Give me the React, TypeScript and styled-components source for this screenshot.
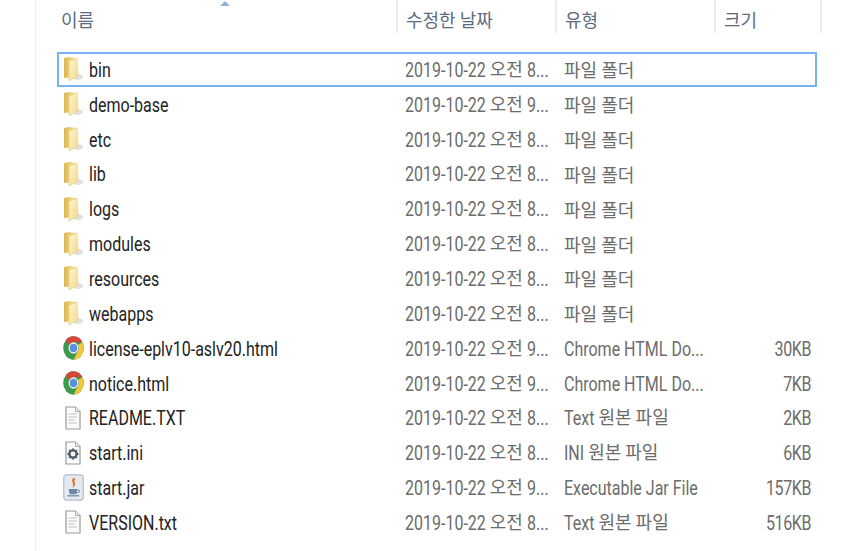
import React from 'react';
import styled, { createGlobalStyle } from 'styled-components';

const GlobalStyle = createGlobalStyle`
	html, body {
		margin: 0;
		padding: 0;
		background: white;
		overflow: hidden;
	}
	body {
		font-family: "Noto Sans CJK KR", sans-serif;
	}
`;

const Window = styled.div`
	width: 843px;
	height: 551px;
	box-sizing: border-box;
	padding-left: 35px;
`;

const Pane = styled.div`
	height: 100%;
	box-sizing: border-box;
	border-left: 1px solid #f1f1f1;
	padding-left: 21px;
`;

const Header = styled.div`
	display: grid;
	grid-template-columns: 341px 159px 159px 106px;
	height: 52px;
	align-items: start;
`;

const HeaderCell = styled.div<{ $first?: boolean }>`
	position: relative;
	height: 33px;
	box-sizing: border-box;
	padding: 7px 0 0 ${props => props.$first ? '4px' : '8px'};
	border-right: 2px solid #e8eef5;
	font-size: 18px;
	line-height: 24px;
	color: #5d6b80;
`;

const SortArrow = styled.span`
	position: absolute;
	top: 1px;
	left: 163px;
	width: 0;
	height: 0;
	border-left: 5px solid transparent;
	border-right: 5px solid transparent;
	border-bottom: 5px solid #8fb4d8;
`;

const Rows = styled.div`
	width: 760px;
`;

const Row = styled.div<{ $selected?: boolean }>`
	display: grid;
	grid-template-columns: 340px 159px 159px 102px;
	height: 34.85px;
	box-sizing: border-box;
	align-items: center;
	font-size: 18px;
	line-height: 24px;
	outline: ${props => props.$selected ? '2px solid #74b3f4' : 'none'};
	outline-offset: -2px;
`;

const NameCell = styled.div`
	display: flex;
	align-items: center;
	gap: 5px;
	padding-left: 5px;
	color: #222222;
	white-space: nowrap;
`;

const IconSlot = styled.span`
	display: flex;
	width: 22px;
	height: 27px;
	flex: none;
	align-items: center;
	justify-content: center;
`;

const Cell = styled.div`
	padding-left: 8px;
	color: #6c6c6c;
	white-space: nowrap;
`;

const SizeCell = styled.div`
	padding-right: 6px;
	text-align: right;
	color: #6c6c6c;
	letter-spacing: -0.4px;
	white-space: nowrap;
`;

// the latin text in the screenshot is tall and narrow
const Latin = styled.span`
	display: inline-block;
	font-family: Roboto, sans-serif;
	font-size: 16px;
	transform: scaleY(1.24);
	transform-origin: center 62%;
`;

const FolderIcon = () => (
	<svg width="20" height="26" viewBox="0 0 20 26">
		<defs>
			<linearGradient id="folderBack" x1="0" y1="0" x2="1" y2="0">
				<stop offset="0" stopColor="#dcb752" />
				<stop offset="1" stopColor="#f5e6a6" />
			</linearGradient>
			<linearGradient id="folderFront" x1="0" y1="0" x2="1" y2="1">
				<stop offset="0" stopColor="#fdf6cf" />
				<stop offset="1" stopColor="#f3d988" />
			</linearGradient>
		</defs>
		<ellipse cx="15" cy="21" rx="5" ry="3" fill="#e0e0e0" />
		<path d="M1 2 L6 1 L13 2 L13 21 L1 22 Z" fill="url(#folderBack)" />
		<path d="M6 5 L14 2 L15 20 L6 25 Z" fill="url(#folderFront)" stroke="#e8cb78" strokeWidth="0.6" />
	</svg>
);

const ChromeIcon = () => (
	<svg width="21" height="26" viewBox="0 0 22 24" preserveAspectRatio="none">
		<circle cx="11" cy="12" r="10.8" fill="#3b9a4b" />
		<path d="M11 1.2 A10.8 10.8 0 0 1 20.3 6.6 L11 6.6 A5.4 5.4 0 0 0 6.2 9.6 L2.8 5 A10.8 10.8 0 0 1 11 1.2 Z" fill="#d4463a" />
		<path d="M20.3 6.6 A10.8 10.8 0 0 1 11 22.8 L15.6 14.8 A5.4 5.4 0 0 0 15.6 9.2 Z" fill="#f2c63f" />
		<circle cx="11" cy="12" r="5.2" fill="#f4f4f4" />
		<circle cx="11" cy="12" r="3.9" fill="#5a8fdf" />
	</svg>
);

const PageIcon = ({ children }: { children: React.ReactNode }) => (
	<svg width="16" height="24" viewBox="0 0 16 24">
		<path d="M1 1 L10.5 1 L15 5.5 L15 23 L1 23 Z" fill="#fbfbfb" stroke="#9a9a9a" strokeWidth="1.2" />
		<path d="M10.5 1 L10.5 5.5 L15 5.5" fill="#e8e8e8" stroke="#b0b0b0" />
		{children}
	</svg>
);

const TextIcon = () => (
	<PageIcon>
		<path d="M3.5 8 H12 M3.5 11 H12 M3.5 14 H9.5 M3.5 17 H12" stroke="#c0c0c0" strokeWidth="1.2" />
	</PageIcon>
);

const IniIcon = () => (
	<PageIcon>
		<circle cx="8" cy="13" r="3.6" fill="none" stroke="#4f5f6b" strokeWidth="2.4" />
		<path d="M8 7.5 V9 M8 17 V18.5 M2.5 13 H4 M12 13 H13.5 M4.1 9.1 L5.2 10.2 M10.8 15.8 L11.9 16.9 M11.9 9.1 L10.8 10.2 M5.2 15.8 L4.1 16.9" stroke="#4f5f6b" strokeWidth="2" />
	</PageIcon>
);

const JarIcon = () => (
	<svg width="21" height="27" viewBox="0 0 22 26" preserveAspectRatio="none">
		<rect x="0.8" y="0.8" width="20.4" height="24.4" rx="3" fill="#e6eaf0" stroke="#b4bcc8" strokeWidth="1.2" />
		<path d="M11 3.5 C7 7 13 9 9.5 13.5 C16 10 10 8 13 4.5 Z" fill="#dd7a2c" />
		<path d="M6 14.5 H15 L14 19.5 H7 Z" fill="#6c88a8" />
		<path d="M15 15.5 C18 15 18 18 14.5 18" fill="none" stroke="#6c88a8" />
		<path d="M4.5 21 H17" stroke="#6c88a8" strokeWidth="1.2" />
	</svg>
);

type Kind = 'folder' | 'chrome' | 'text' | 'ini' | 'jar';

const icons: Record<Kind, React.ReactNode> = {
	folder: <FolderIcon />,
	chrome: <ChromeIcon />,
	text: <TextIcon />,
	ini: <IniIcon />,
	jar: <JarIcon />,
};

const folderType = '파일 폴더';
const chromeType = <Latin>Chrome HTML Do...</Latin>;
const textType = <><Latin>Text</Latin> 원본 파일</>;

const files: { name: string; kind: Kind; hour: string; type: React.ReactNode; size?: string }[] = [
	{ name: 'bin', kind: 'folder', hour: '8', type: folderType },
	{ name: 'demo-base', kind: 'folder', hour: '9', type: folderType },
	{ name: 'etc', kind: 'folder', hour: '8', type: folderType },
	{ name: 'lib', kind: 'folder', hour: '8', type: folderType },
	{ name: 'logs', kind: 'folder', hour: '8', type: folderType },
	{ name: 'modules', kind: 'folder', hour: '8', type: folderType },
	{ name: 'resources', kind: 'folder', hour: '8', type: folderType },
	{ name: 'webapps', kind: 'folder', hour: '8', type: folderType },
	{ name: 'license-eplv10-aslv20.html', kind: 'chrome', hour: '9', type: chromeType, size: '30KB' },
	{ name: 'notice.html', kind: 'chrome', hour: '9', type: chromeType, size: '7KB' },
	{ name: 'README.TXT', kind: 'text', hour: '8', type: textType, size: '2KB' },
	{ name: 'start.ini', kind: 'ini', hour: '8', type: <><Latin>INI</Latin> 원본 파일</>, size: '6KB' },
	{ name: 'start.jar', kind: 'jar', hour: '9', type: <Latin>Executable Jar File</Latin>, size: '157KB' },
	{ name: 'VERSION.txt', kind: 'text', hour: '8', type: textType, size: '516KB' },
];

const App = () => {
	return (
		<Window>
			<GlobalStyle />
			<Pane>
				<Header>
					<HeaderCell $first>이름<SortArrow /></HeaderCell>
					<HeaderCell>수정한 날짜</HeaderCell>
					<HeaderCell>유형</HeaderCell>
					<HeaderCell>크기</HeaderCell>
				</Header>
				<Rows>
					{files.map((file, i) => (
						<Row key={file.name} $selected={i === 0}>
							<NameCell>
								<IconSlot>{icons[file.kind]}</IconSlot>
								<span><Latin>{file.name}</Latin></span>
							</NameCell>
							<Cell><Latin>2019-10-22</Latin> 오전 <Latin>{file.hour}...</Latin></Cell>
							<Cell>{file.type}</Cell>
							<SizeCell><Latin>{file.size}</Latin></SizeCell>
						</Row>
					))}
				</Rows>
			</Pane>
		</Window>
	);
};

export default App;
